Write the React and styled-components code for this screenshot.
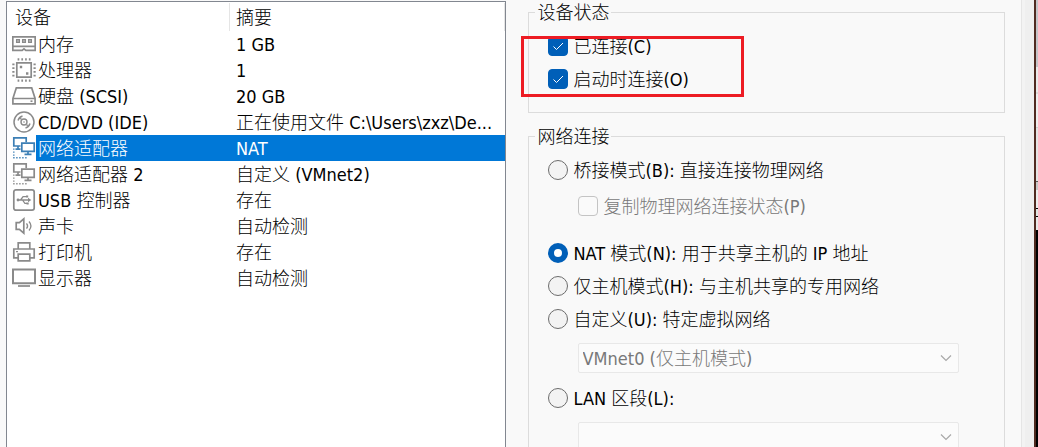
import React, { useState } from "react";
import styled, { createGlobalStyle } from "styled-components";

const GlobalStyle = createGlobalStyle`
  * {
    box-sizing: border-box;
  }

  body {
    margin: 0;
    background-color: #f9f9f9;
    color: #000;
    font-family: "DejaVu Sans Condensed", "Noto Sans CJK SC Light", "Noto Sans CJK SC", sans-serif;
    font-size: 18px;
    font-weight: 300;
    line-height: 24px;
  }
`;

const Window = styled.div`
  display: flex;
  height: 100vh;
  overflow: hidden;
`;

const Dialog = styled.main`
  flex: 1;
  min-width: 0;
  display: grid;
  grid-template-columns: minmax(0, 506fr) minmax(0, 516fr);
  border-right: 1px solid #e5e5e5;
`;

const DevicePanel = styled.section`
  margin: 1px 0 0 6px;
  border: 1px solid #828790;
  border-bottom: 0;
  background-color: #fff;
`;

const DeviceTable = styled.table`
  width: 100%;
  table-layout: fixed;
  border-collapse: collapse;
`;

const HeadCell = styled.th`
  width: ${(props) => props.$width || "auto"};
  height: 29px;
  padding: 2px 0 0 ${(props) => props.$indent};
  background: linear-gradient(#e5e5e5, #e5e5e5) right 0 top 1px / 1px 28px
    no-repeat;
  font-weight: 300;
  text-align: left;
`;

const Row = styled.tr`
  height: 26px;
  cursor: default;
  color: ${(props) => (props.$selected ? "#fff" : "#000")};
`;

const Cell = styled.td`
  padding: 2px 6px 0;
  background-color: ${(props) => (props.$selected ? "#0078d7" : "#fff")};
  overflow: hidden;
  text-overflow: ellipsis;
  white-space: nowrap;
`;

const NameCell = styled.td`
  padding: 0 0 0 5px;
`;

const NameBox = styled.div`
  display: flex;
  align-items: center;
  height: 26px;
`;

const Name = styled.span`
  flex: 1;
  padding: 2px 0 0 2px;
  white-space: nowrap;
  background-color: ${(props) => (props.$selected ? "#0078d7" : "transparent")};
`;

const Icon = styled.svg`
  flex: none;
  width: 24px;
  height: 24px;
  fill: none;
  stroke: ${(props) => (props.$selected ? "#3c7fb5" : "#8a8a8a")};
  stroke-width: 1.7;
`;

const SettingsPanel = styled.section`
  padding: 0 16px 0 22px;
`;

const Group = styled.fieldset`
  position: relative;
  min-width: 0;
  margin: 0 0 11px;
  padding: 0;
  border: 1px solid #dcdcdc;
`;

const Legend = styled.legend`
  margin-left: 6px;
  padding: 2px 1px 0 3px;
  line-height: 22px;
`;

const GroupBody = styled.div`
  padding: 6px 45px 16px 19px;
`;

const Option = styled.label`
  display: flex;
  align-items: center;
  gap: 6px;
  height: 32px;
  margin: ${(props) => (props.$nested ? "4px 0 15px 30px" : "0 0 1px")};
  color: ${(props) => (props.$nested ? "#787878" : "#000")};
  white-space: nowrap;
`;

const OptionText = styled.span`
  padding-top: 2px;
`;

const Tick = styled.span`
  display: grid;
  width: 20px;
  height: 20px;

  > * {
    grid-area: 1 / 1;
  }

  svg {
    width: 20px;
    height: 20px;
    fill: none;
    stroke: #fff;
    pointer-events: none;
  }
`;

const Checkbox = styled.input`
  appearance: none;
  width: 20px;
  height: 20px;
  margin: 0;
  border: 1px solid #868686;
  border-radius: 4px;
  background-color: #f3f3f3;

  &:checked {
    border-color: #005fb8;
    background-color: #005fb8;
  }

  &:disabled {
    border-color: #c4c4c4;
    background-color: #fafafa;
  }
`;

const Radio = styled.input`
  appearance: none;
  flex: none;
  width: 20px;
  height: 20px;
  margin: 0;
  border: 1px solid #6c6c6c;
  border-radius: 50%;
  background-color: #f3f3f3;

  &:checked {
    border: 6px solid #005fb8;
    background-color: #fff;
  }
`;

const SelectBox = styled.div`
  display: grid;
  align-items: center;
  margin: 8px 0 9px 30px;

  > * {
    grid-area: 1 / 1;
  }

  svg {
    justify-self: end;
    width: 12px;
    height: 8px;
    margin-right: 7px;
    fill: none;
    stroke: #a8a8a8;
    stroke-width: 1.2;
    pointer-events: none;
  }
`;

const Select = styled.select`
  appearance: none;
  width: 100%;
  height: 30px;
  padding: 2px 26px 0 4px;
  border: 1px solid #e8e8e8;
  border-radius: 2px;
  background-color: #fbfbfb;
  color: #787878;
  font: inherit;
  opacity: 1;
`;

const Highlight = styled.div`
  position: absolute;
  top: 12px;
  left: -8px;
  width: 223px;
  height: 61px;
  border: 3px solid #ed1c24;
  pointer-events: none;
`;

const Frame = styled.div`
  width: 14px;
  border-right: 2px solid #4f2a20;
  background: linear-gradient(to right, #f3f3f3 3px, #efefef 3px);
`;

const Backdrop = styled.div`
  width: 2px;
  background: linear-gradient(
    #c5c4c8 67px,
    #eaeaea 67px 92px,
    #dadada 92px 94px,
    #eeeeee 94px 127px,
    #d0d0d0 127px 128px,
    #e4e4e4 128px 181px,
    #555 181px 182px,
    #c8c8c8 182px 190px,
    #ededed 190px 208px,
    #000 208px 209px,
    #e0e5e2 209px 216px,
    #000 216px 217px,
    #e8e8e8 217px 230px,
    #000 230px
  );
`;

const icons = {
  memory: (
    <>
      <path d="M.8 4.8h22.4v9.6H.8z" />
      <path
        d="M4.7 7.7h2.6v2.6H4.7zM10.7 7.7h2.6v2.6h-2.6zM16.7 7.7h2.6v2.6h-2.6z"
        strokeWidth="1.5"
      />
      <path d="M.8 14v4.4h9.4l1.8-1.5 1.8 1.5h9.4V14" />
    </>
  ),
  cpu: (
    <>
      <path d="M4.8 4.8h14.4v14.4H4.8z" />
      <path
        d="M5.6 1.4h13M5.6 22.6h13M1.4 5.6v13M22.6 5.6v13"
        strokeWidth="2.2"
        strokeDasharray="1.7 2.05"
      />
      <path d="M7.8 9h2.4M14 15.5h2.4" strokeWidth="2.4" />
    </>
  ),
  disk: (
    <>
      <path d="M.9 14.5 4.3 3.9h15.4l3.4 10.6v5.3H.9zM.9 14.5h22.2" />
      <path d="M18.5 17.2h2" />
    </>
  ),
  disc: (
    <>
      <circle cx="12" cy="12" r="10" strokeWidth="1.5" />
      <circle cx="12" cy="12" r="3" strokeWidth="1.4" />
      <circle cx="12" cy="12" r=".8" fill="#8a8a8a" stroke="none" />
      <path
        d="M6 10.5a6.4 6.4 0 0 1 4.5-4.5M8.3 9.2l1-1M18 13.5a6.4 6.4 0 0 1-4.5 4.5M15.7 14.8l-1 1"
        strokeWidth="1.4"
      />
    </>
  ),
  network: (
    <>
      <path d="M8.5 10H1.8V1.8h12.4v4.4M6 10v3.2M3.5 13.2h5" />
      <path d="M9.8 7.1h12.4v8.2H9.8zM16 15.3v3M12.5 18.3h7" />
      <path
        d="M1.8 12.4v9M1.2 21.8h14"
        strokeWidth="1.4"
        strokeDasharray="1.4 1.6"
      />
    </>
  ),
  usb: (
    <>
      <rect x="1.8" y="1.8" width="20.4" height="20.4" rx="2.2" />
      <path
        d="M6 12h11M8.5 12l2.6-3.4h3M10.5 12l2.4 3.4h2.2"
        strokeWidth="1.3"
      />
      <path d="m16 9.8 3.3 2.2-3.3 2.2z" fill="#8a8a8a" stroke="none" />
      <circle cx="6" cy="12" r="1.4" fill="#8a8a8a" stroke="none" />
      <path
        d="M14 7.5h2.2v2H14zM14.5 14.4h2.2v2h-2.2z"
        fill="#8a8a8a"
        stroke="none"
      />
    </>
  ),
  sound: (
    <>
      <path d="M4.2 8.6h3.2l4.4-3.8v14.4l-4.4-3.8H4.2z" />
      <path d="M14.5 9.3q2.2 2.7 0 5.4M17 7.5q3.9 4.5 0 9" strokeWidth="1.3" />
    </>
  ),
  printer: (
    <>
      <path d="M6.2 9V2.8h11.6V9M6 17.8H1.8V9h20.4v8.8H18" />
      <path d="M6.2 14.2h11.6v6.6H6.2z" />
      <path d="M4 11.6h2" strokeWidth="1.3" />
    </>
  ),
  display: (
    <>
      <path d="M1 3.6h22v13.6H1z" strokeWidth="2" />
      <path d="M6 20h12" />
    </>
  ),
};

const devices = [
  { icon: "memory", name: "内存", summary: "1 GB" },
  { icon: "cpu", name: "处理器", summary: "1" },
  { icon: "disk", name: "硬盘 (SCSI)", summary: "20 GB" },
  {
    icon: "disc",
    name: "CD/DVD (IDE)",
    summary: "正在使用文件 C:\\Users\\zxz\\De...",
  },
  { icon: "network", name: "网络适配器", summary: "NAT" },
  { icon: "network", name: "网络适配器 2", summary: "自定义 (VMnet2)" },
  { icon: "usb", name: "USB 控制器", summary: "存在" },
  { icon: "sound", name: "声卡", summary: "自动检测" },
  { icon: "printer", name: "打印机", summary: "存在" },
  { icon: "display", name: "显示器", summary: "自动检测" },
];

function DeviceList() {
  const [selected, setSelected] = useState(4);

  return (
    <DevicePanel>
      <DeviceTable>
        <thead>
          <tr>
            <HeadCell $width="223px" $indent="8px">
              设备
            </HeadCell>
            <HeadCell $indent="6px">摘要</HeadCell>
          </tr>
        </thead>
        <tbody>
          {devices.map((device, index) => {
            const active = index === selected;
            return (
              <Row
                key={device.name}
                $selected={active}
                onClick={() => setSelected(index)}
              >
                <NameCell>
                  <NameBox>
                    <Icon viewBox="0 0 24 24" $selected={active}>
                      {icons[device.icon]}
                    </Icon>
                    <Name $selected={active}>{device.name}</Name>
                  </NameBox>
                </NameCell>
                <Cell $selected={active}>{device.summary}</Cell>
              </Row>
            );
          })}
        </tbody>
      </DeviceTable>
    </DevicePanel>
  );
}

function CheckOption({ children, nested, ...rest }) {
  return (
    <Option $nested={nested}>
      <Tick>
        <Checkbox type="checkbox" {...rest} />
        {!nested && (
          <svg viewBox="0 0 20 20">
            <path d="m5.5 10.5 3 3 6.5-6.5" />
          </svg>
        )}
      </Tick>
      <OptionText>{children}</OptionText>
    </Option>
  );
}

function RadioOption({ children, ...rest }) {
  return (
    <Option>
      <Radio type="radio" name="network" {...rest} />
      <OptionText>{children}</OptionText>
    </Option>
  );
}

function DropDown({ label, children }) {
  return (
    <SelectBox>
      <Select disabled aria-label={label}>
        {children}
      </Select>
      <svg viewBox="0 0 12 8">
        <path d="m1 1.5 5 5 5-5" />
      </svg>
    </SelectBox>
  );
}

function App() {
  return (
    <Window>
      <GlobalStyle />
      <Dialog>
        <DeviceList />
        <SettingsPanel>
          <Group>
            <Legend>设备状态</Legend>
            <GroupBody>
              <CheckOption defaultChecked>已连接(C)</CheckOption>
              <CheckOption defaultChecked>启动时连接(O)</CheckOption>
            </GroupBody>
            <Highlight />
          </Group>
          <Group>
            <Legend>网络连接</Legend>
            <GroupBody>
              <RadioOption>桥接模式(B): 直接连接物理网络</RadioOption>
              <CheckOption nested disabled>
                复制物理网络连接状态(P)
              </CheckOption>
              <RadioOption defaultChecked>
                NAT 模式(N): 用于共享主机的 IP 地址
              </RadioOption>
              <RadioOption>仅主机模式(H): 与主机共享的专用网络</RadioOption>
              <RadioOption>自定义(U): 特定虚拟网络</RadioOption>
              <DropDown label="虚拟网络">
                <option>VMnet0 (仅主机模式)</option>
              </DropDown>
              <RadioOption>LAN 区段(L):</RadioOption>
              <DropDown label="LAN 区段" />
            </GroupBody>
          </Group>
        </SettingsPanel>
      </Dialog>
      <Frame />
      <Backdrop />
    </Window>
  );
}

export default App;
